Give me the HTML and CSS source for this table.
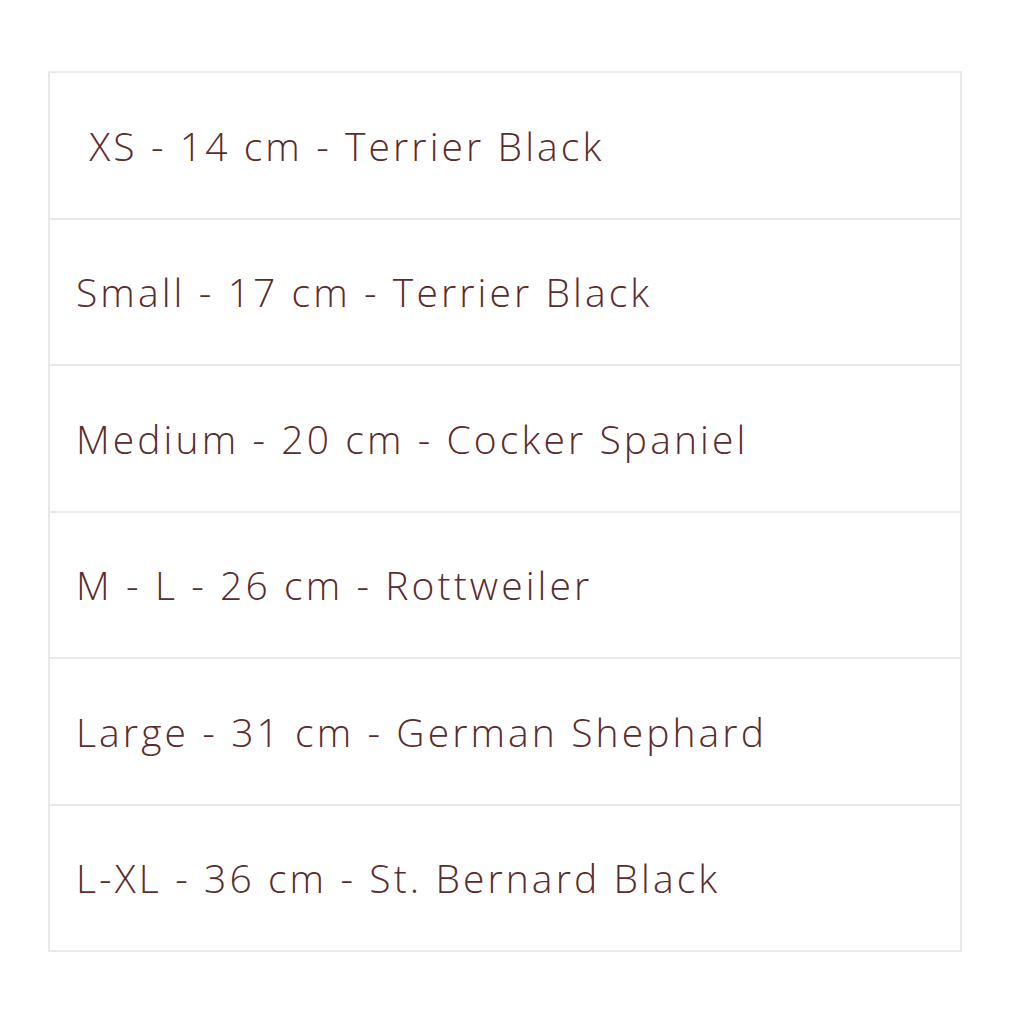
FILE: index.html
```html
<!DOCTYPE html>
<html>
<head>
<meta charset="utf-8">
<link rel="stylesheet" href="styles.css">
</head>
<body>
<ul class="sizes">
  <li class="row">&nbsp;XS - 14 cm - Terrier Black</li>
  <li class="row">Small - 17 cm - Terrier Black</li>
  <li class="row">Medium - 20 cm - Cocker Spaniel</li>
  <li class="row">M - L - 26 cm - Rottweiler</li>
  <li class="row">Large - 31 cm - German Shephard</li>
  <li class="row">L-XL - 36 cm - St. Bernard Black</li>
</ul>
</body>
</html>
```
FILE: styles.css
```css
html, body {
  margin: 0;
  padding: 0;
  background: #ffffff;
}
body {
  padding: 71px 61px 0 48px;
}
.sizes {
  list-style: none;
  margin: 0;
  padding: 0;
  width: 914px;
  box-sizing: border-box;
  border: 2px solid #ebe9e5;
  display: flex;
  flex-direction: column;
}
.row {
  height: 144.5px;
  display: flex;
  align-items: center;
  padding-left: 26px;
  font-family: "Open Sans", "Lato", sans-serif;
  font-size: 39px;
  font-weight: 300;
  letter-spacing: 3.1px;
  word-spacing: 0;
  color: #5a2c2c;
  white-space: pre;
}
.row + .row {
  border-top: 2px solid #ebe9e5;
}
```
